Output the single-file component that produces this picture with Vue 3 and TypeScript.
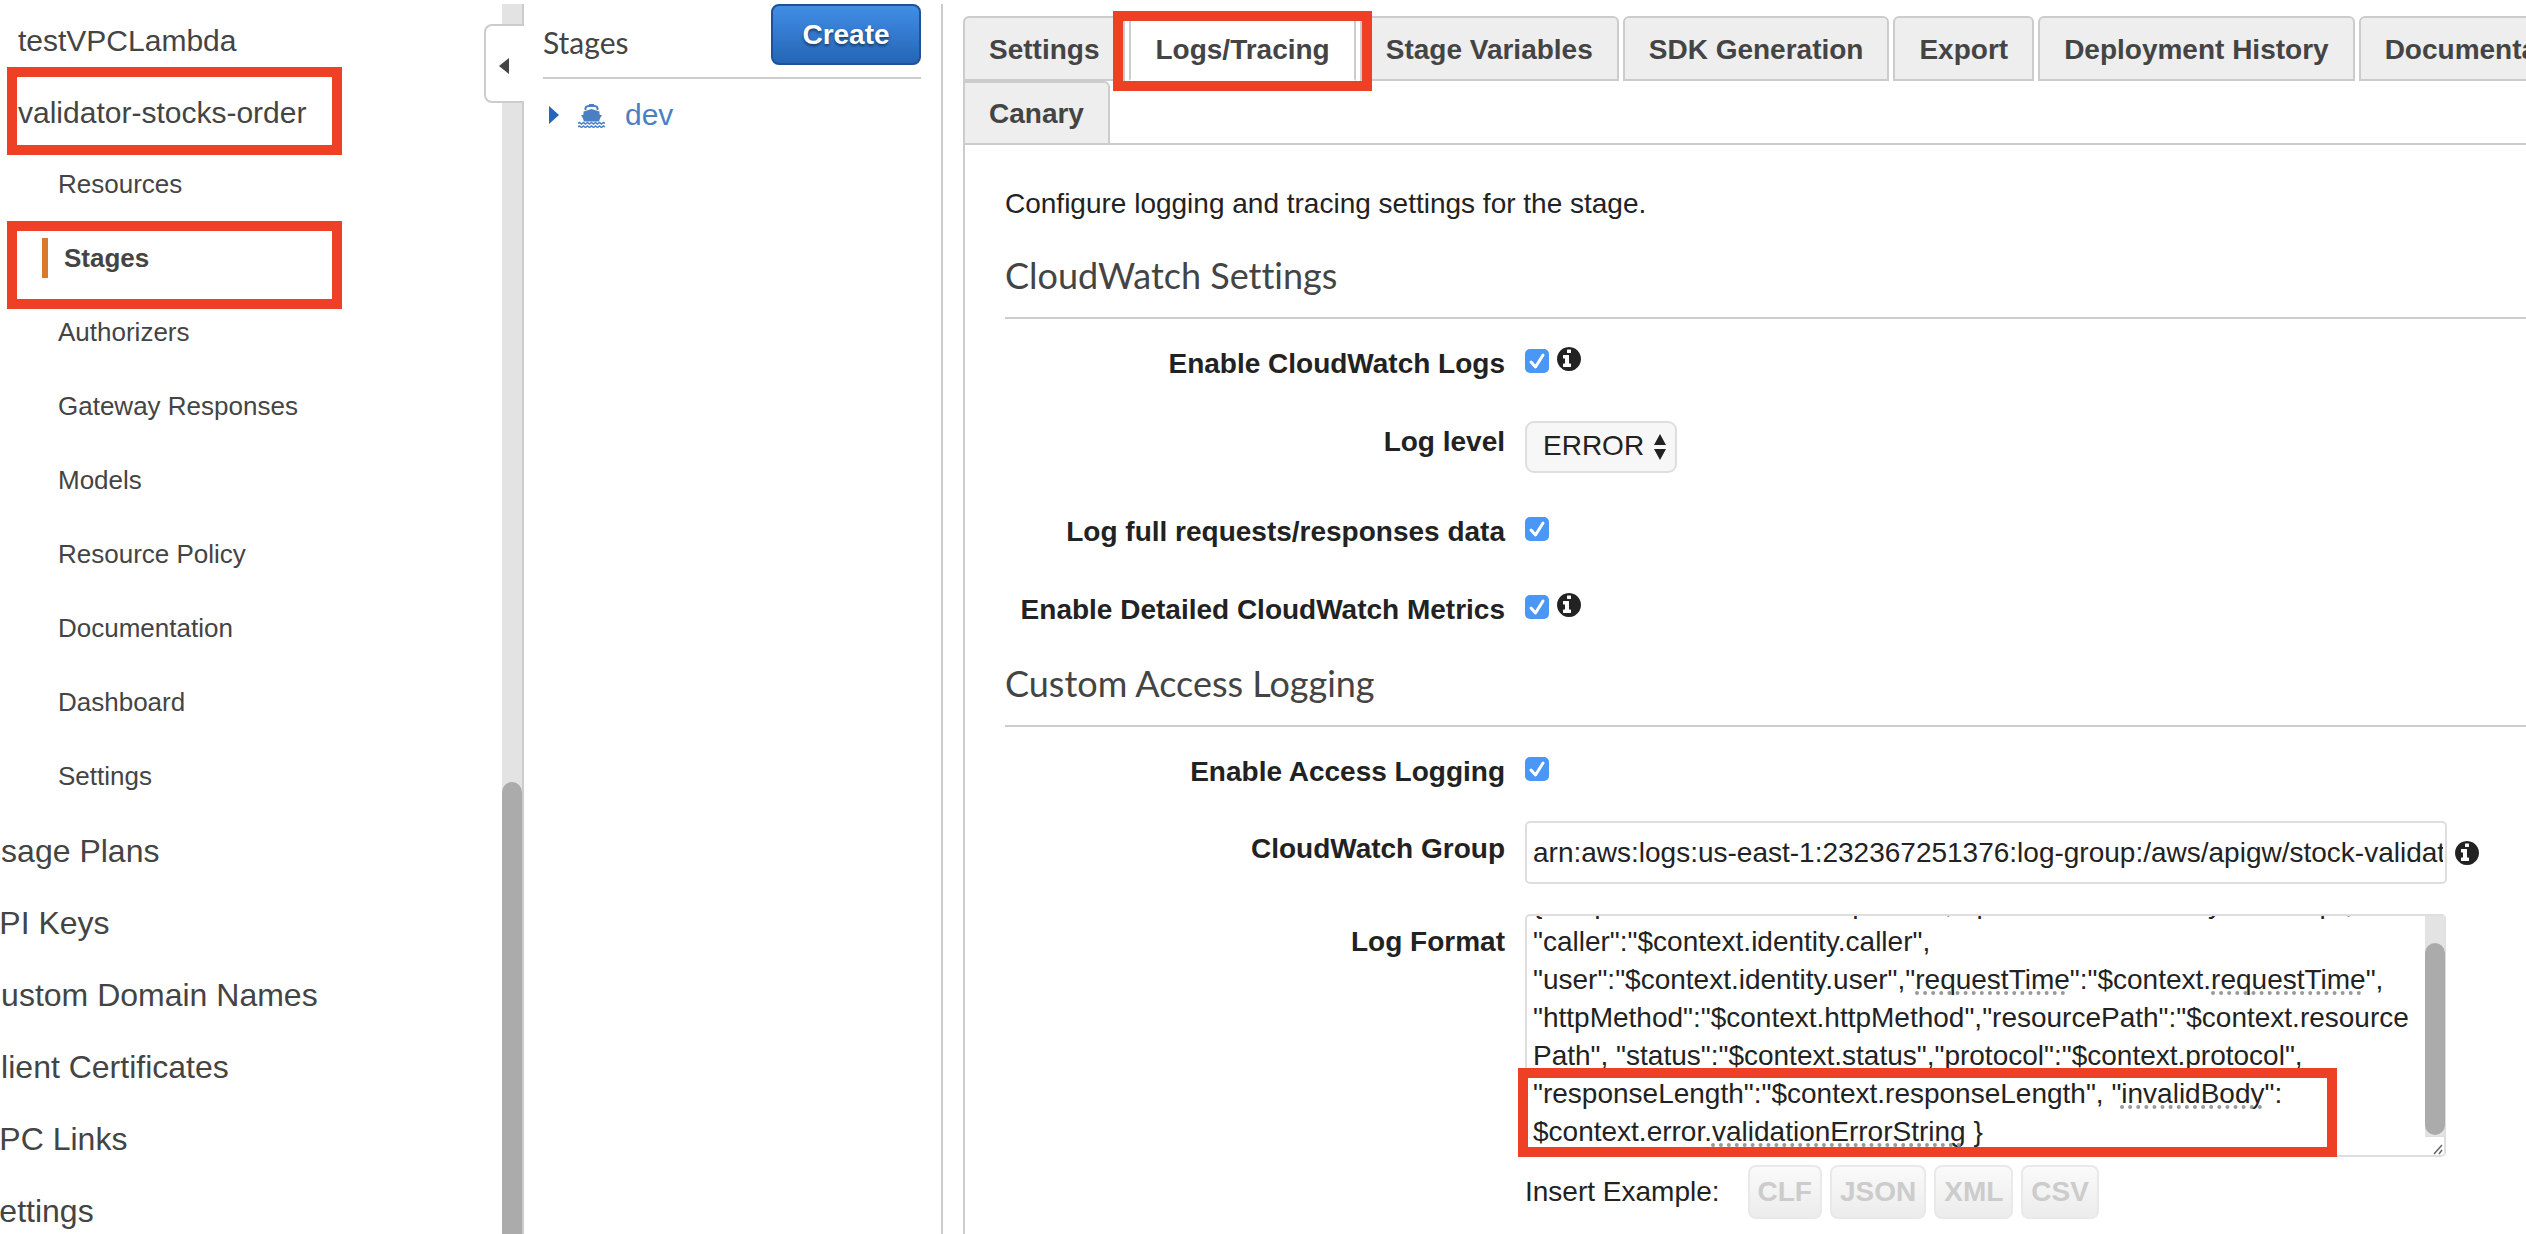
<script setup lang="ts">
import { onMounted, ref } from 'vue'

interface Tab {
  label: string
  active?: boolean
}

interface SpellingMark {
  line: number
  left: number
  width: number
}

const apis = ['testVPCLambda', 'validator-stocks-order']
const currentApi = 'validator-stocks-order'

const sections = [
  'Resources',
  'Stages',
  'Authorizers',
  'Gateway Responses',
  'Models',
  'Resource Policy',
  'Documentation',
  'Dashboard',
  'Settings',
]
const currentSection = 'Stages'

const globalLinks = [
  'Usage Plans',
  'API Keys',
  'Custom Domain Names',
  'Client Certificates',
  'VPC Links',
  'Settings',
]

const tabs: Tab[] = [
  { label: 'Settings' },
  { label: 'Logs/Tracing', active: true },
  { label: 'Stage Variables' },
  { label: 'SDK Generation' },
  { label: 'Export' },
  { label: 'Deployment History' },
  { label: 'Documentation History' },
]

const examples = ['CLF', 'JSON', 'XML', 'CSV']

const cloudWatchLogs = ref(true)
const logLevel = ref('ERROR')
const fullData = ref(true)
const detailedMetrics = ref(true)
const accessLogging = ref(true)
const logGroup = ref('arn:aws:logs:us-east-1:232367251376:log-group:/aws/apigw/stock-validator')
const logFormat = ref(
  [
    '{ "requestId":"$context.requestId", "ip":"$context.identity.sourceIp",',
    '"caller":"$context.identity.caller",',
    '"user":"$context.identity.user","requestTime":"$context.requestTime",',
    '"httpMethod":"$context.httpMethod","resourcePath":"$context.resource',
    'Path", "status":"$context.status","protocol":"$context.protocol",',
    '"responseLength":"$context.responseLength", "invalidBody":',
    '$context.error.validationErrorString }',
  ].join('\n'),
)

// Dotted spell-check underlines, counted in visible lines of the log format box
const marks: SpellingMark[] = [
  { line: 2, left: 390, width: 150 },
  { line: 2, left: 686, width: 150 },
  { line: 5, left: 595, width: 142 },
  { line: 6, left: 186, width: 250 },
]

const formatBox = ref<HTMLTextAreaElement | null>(null)

onMounted(() => {
  if (formatBox.value) formatBox.value.scrollTop = formatBox.value.scrollHeight
})
</script>

<template>
  <div class="console">
    <aside class="sidebar">
      <nav class="sidebar-nav">
        <ul class="api-list">
          <li v-for="api in apis" :key="api">
            <a href="#">{{ api }}</a>
            <span v-if="api === currentApi" class="callout callout-nav"></span>
          </li>
        </ul>
        <ul class="section-list">
          <li v-for="item in sections" :key="item" :class="{ current: item === currentSection }">
            <a href="#">{{ item }}</a>
            <span v-if="item === currentSection" class="callout callout-nav"></span>
          </li>
        </ul>
        <ul class="global-list">
          <li v-for="item in globalLinks" :key="item"><a href="#">{{ item }}</a></li>
        </ul>
      </nav>
      <div class="sidebar-track"><div class="sidebar-thumb"></div></div>
      <button class="collapse" type="button" aria-label="Collapse navigation">
        <svg width="10" height="16" viewBox="0 0 10 16"><path d="M10 0v16L0 8z" fill="#444" /></svg>
      </button>
    </aside>

    <section class="stages">
      <header class="stages-head">
        <h2>Stages</h2>
        <button class="create" type="button">Create</button>
      </header>
      <div class="stage">
        <svg class="stage-caret" width="10" height="18" viewBox="0 0 10 18"><path d="M0 0l10 9-10 9z" fill="#2467b9" /></svg>
        <svg class="stage-ship" width="27" height="25" viewBox="0 0 27 25" fill="none">
          <path d="M7.500 7V5Q8 3 11 3h5q3 0 3.500 2v2" stroke="#4a80c3" stroke-width="2" />
          <path d="M11 1h5v2h-5z" fill="#4a80c3" />
          <path d="M5.500 8.500l8-2.500 8 2.500v3l2.500 1q-2.500 2.500-3 6H6q-.5-3.500-3-6l2.500-1z" fill="#4a80c3" />
          <path d="M0 20.500l1.500-1 2 1.500 2-1.500 2 1.500 2-1.500 2 1.500 2-1.500 2 1.500 2-1.500 2 1.500 2-1.500 2 1.500 2-1.500 1.500 1M0 24l1.500-1 2 1.500 2-1.500 2 1.500 2-1.500 2 1.500 2-1.500 2 1.500 2-1.500 2 1.500 2-1.500 2 1.500 2-1.500 1.500 1" stroke="#4a80c3" stroke-width="1.500" />
        </svg>
        <a href="#">dev</a>
      </div>
    </section>

    <main class="main">
      <div class="tab-row">
        <div v-for="tab in tabs" :key="tab.label" class="tab-slot">
          <button class="tab" :class="{ active: tab.active }" type="button">{{ tab.label }}</button>
          <span v-if="tab.active" class="callout callout-tab"></span>
        </div>
      </div>
      <div class="tab-row second">
        <button class="tab" type="button">Canary</button>
      </div>

      <div class="panel">
        <p class="intro">Configure logging and tracing settings for the stage.</p>

        <h3>CloudWatch Settings</h3>
        <div class="rows">
          <div class="row">
            <label for="cw-logs">Enable CloudWatch Logs</label>
            <div class="control">
              <span class="check">
                <input id="cw-logs" v-model="cloudWatchLogs" type="checkbox" />
                <svg viewBox="0 0 24 24"><path d="M6 13l4.500 5L18 6" /></svg>
              </span>
              <svg class="info" viewBox="128 128 1536 1536"><path d="M1024 1376v-160q0-14-9-23t-23-9h-96v-512q0-14-9-23t-23-9h-320q-14 0-23 9t-9 23v160q0 14 9 23t23 9h96v320h-96q-14 0-23 9t-9 23v160q0 14 9 23t23 9h448q14 0 23-9t9-23zM1024 480v-160q0-14-9-23t-23-9h-192q-14 0-23 9t-9 23v160q0 14 9 23t23 9h192q14 0 23-9t9-23zM1664 896q0 209-103 385.500t-279.500 279.500-385.500 103-385.500-103-279.500-279.500-103-385.500 103-385.500 279.500-279.500 385.500-103 385.500 103 279.500 279.500 103 385.500z" /></svg>
            </div>
          </div>
          <div class="row">
            <label for="log-level">Log level</label>
            <div class="control">
              <span class="select">
                <select id="log-level" v-model="logLevel">
                  <option>ERROR</option>
                  <option>INFO</option>
                </select>
                <svg width="12" height="26" viewBox="0 0 12 26"><path d="M6 0l6 11H0zM6 26l6-11H0z" fill="#222" /></svg>
              </span>
            </div>
          </div>
          <div class="row">
            <label for="full-data">Log full requests/responses data</label>
            <div class="control">
              <span class="check">
                <input id="full-data" v-model="fullData" type="checkbox" />
                <svg viewBox="0 0 24 24"><path d="M6 13l4.500 5L18 6" /></svg>
              </span>
            </div>
          </div>
          <div class="row">
            <label for="metrics">Enable Detailed CloudWatch Metrics</label>
            <div class="control">
              <span class="check">
                <input id="metrics" v-model="detailedMetrics" type="checkbox" />
                <svg viewBox="0 0 24 24"><path d="M6 13l4.500 5L18 6" /></svg>
              </span>
              <svg class="info" viewBox="128 128 1536 1536"><path d="M1024 1376v-160q0-14-9-23t-23-9h-96v-512q0-14-9-23t-23-9h-320q-14 0-23 9t-9 23v160q0 14 9 23t23 9h96v320h-96q-14 0-23 9t-9 23v160q0 14 9 23t23 9h448q14 0 23-9t9-23zM1024 480v-160q0-14-9-23t-23-9h-192q-14 0-23 9t-9 23v160q0 14 9 23t23 9h192q14 0 23-9t9-23zM1664 896q0 209-103 385.500t-279.500 279.500-385.500 103-385.500-103-279.500-279.500-103-385.500 103-385.500 279.500-279.500 385.500-103 385.500 103 279.500 279.500 103 385.500z" /></svg>
            </div>
          </div>
        </div>

        <h3>Custom Access Logging</h3>
        <div class="rows compact">
          <div class="row">
            <label for="access">Enable Access Logging</label>
            <div class="control">
              <span class="check">
                <input id="access" v-model="accessLogging" type="checkbox" />
                <svg viewBox="0 0 24 24"><path d="M6 13l4.500 5L18 6" /></svg>
              </span>
            </div>
          </div>
          <div class="row tall">
            <label for="log-group">CloudWatch Group</label>
            <div class="control field">
              <input id="log-group" v-model="logGroup" class="text" type="text" />
              <svg class="info" viewBox="128 128 1536 1536"><path d="M1024 1376v-160q0-14-9-23t-23-9h-96v-512q0-14-9-23t-23-9h-320q-14 0-23 9t-9 23v160q0 14 9 23t23 9h96v320h-96q-14 0-23 9t-9 23v160q0 14 9 23t23 9h448q14 0 23-9t9-23zM1024 480v-160q0-14-9-23t-23-9h-192q-14 0-23 9t-9 23v160q0 14 9 23t23 9h192q14 0 23-9t9-23zM1664 896q0 209-103 385.500t-279.500 279.500-385.500 103-385.500-103-279.500-279.500-103-385.500 103-385.500 279.500-279.500 385.500-103 385.500 103 279.500 279.500 103 385.500z" /></svg>
            </div>
          </div>
          <div class="row tall">
            <label for="log-format">Log Format</label>
            <div class="format">
              <div class="format-box">
                <textarea id="log-format" ref="formatBox" v-model="logFormat" spellcheck="false"></textarea>
                <span
                  v-for="(mark, i) in marks"
                  :key="i"
                  class="mark"
                  :style="{ left: mark.left + 'px', width: mark.width + 'px', top: mark.line * 38 + 1 + 'px' }"
                ></span>
                <div class="format-track"><div class="format-thumb"></div></div>
                <svg class="grip" width="20" height="20" viewBox="0 0 20 20"><path d="M9 17l8-9M14 17l3-4" stroke="#666" stroke-width="1.500" fill="none" /></svg>
                <span class="callout callout-format"></span>
              </div>
              <div class="examples">
                <span>Insert Example:</span>
                <button v-for="name in examples" :key="name" type="button" disabled>{{ name }}</button>
              </div>
            </div>
          </div>
        </div>
      </div>
    </main>
  </div>
</template>

<style>
body {
  margin: 0;
  background: #fff;
}
</style>

<style scoped>
.console {
  display: flex;
  box-sizing: border-box;
  height: 100vh;
  padding-top: 4px;
  overflow: hidden;
  font-family: "Liberation Sans", Arial, sans-serif;
  font-size: 28px;
  line-height: 38px;
  color: #222;
}
.console * {
  box-sizing: border-box;
}
button,
input,
select,
textarea {
  margin: 0;
  font: inherit;
  color: inherit;
}
a {
  color: inherit;
  text-decoration: none;
}
ul {
  margin: 0;
  padding: 0;
  list-style: none;
}

.callout {
  position: absolute;
  z-index: 5;
  border: 10px solid #ed4024;
  pointer-events: none;
}

/* Left navigation */
.sidebar {
  position: relative;
  display: flex;
  flex: none;
  width: 524px;
  color: #444;
}
.sidebar-nav {
  flex: 1;
  padding-top: 1px;
  overflow: hidden;
}
.sidebar-nav li {
  position: relative;
  white-space: nowrap;
}
.api-list li {
  padding-left: 18px;
  font-size: 30px;
  line-height: 72px;
}
.section-list {
  margin-top: -2px;
}
.section-list li {
  padding-left: 58px;
  font-size: 26px;
  line-height: 74px;
}
.section-list .current {
  padding-left: 42px;
  font-weight: 700;
}
.current a {
  display: inline-block;
  padding-left: 16px;
  border-left: 6px solid #d9792b;
  line-height: 40px;
}
.global-list {
  margin-top: 2px;
}
.global-list li {
  margin-left: -22px;
  font-size: 32px;
  line-height: 72px;
}
.callout-nav {
  top: -10px;
  left: 7px;
  width: 335px;
  height: 88px;
}
.section-list .callout-nav {
  top: 0;
}
.sidebar-track {
  display: flex;
  flex-direction: column;
  justify-content: flex-end;
  width: 22px;
  border-right: 2px solid #ccc;
  background: #e3e3e3;
}
.sidebar-thumb {
  height: 452px;
  border-radius: 10px 10px 0 0;
  background: #ababab;
}
.collapse {
  position: absolute;
  top: 20px;
  right: 0;
  display: flex;
  align-items: center;
  width: 40px;
  height: 79px;
  padding: 4px 0 0 13px;
  border: 2px solid #ccc;
  border-right: 0;
  border-radius: 8px 0 0 8px;
  background: #fff;
}

/* Stage tree */
.stages {
  flex: none;
  width: 419px;
  padding: 0 20px 0 19px;
  border-right: 2px solid #ccc;
}
.stages-head {
  display: flex;
  align-items: flex-start;
  justify-content: space-between;
  height: 75px;
  border-bottom: 2px solid #ccc;
}
h2,
h3 {
  margin: 0;
  font-family: Lato, sans-serif;
  font-weight: 400;
  font-variant-ligatures: none;
  color: #444;
}
h2 {
  padding-top: 19px;
  font-size: 30px;
  line-height: 38px;
}
.create {
  width: 150px;
  height: 61px;
  border: 2px solid #1e5296;
  border-radius: 8px;
  background: linear-gradient(#418ee6, #2465b5);
  color: #fff;
  font-weight: 700;
  text-shadow: 0 2px 3px rgba(0, 0, 0, 0.5);
}
.stage {
  display: flex;
  align-items: center;
  padding: 17px 0 0 6px;
  font-size: 30px;
  color: #4a80c3;
}
.stage-ship {
  margin: 0 20px 0 19px;
}

/* Tabs */
.main {
  flex: 1;
  min-width: 0;
  padding: 12px 0 0 20px;
}
.tab-row {
  display: flex;
  gap: 4px;
  margin-right: -400px;
}
.tab-row.second {
  height: 64px;
  margin-right: 0;
  border-bottom: 2px solid #ccc;
}
.tab-slot {
  position: relative;
}
.tab {
  height: 65px;
  padding: 2px 24px 0;
  border: 2px solid #ccc;
  border-radius: 6px 6px 0 0;
  background: #eee;
  color: #444;
  font-weight: 700;
  white-space: nowrap;
}
.tab.active {
  border-top-color: #d9792b;
  border-bottom-color: #fff;
  background: #fff;
}
.second .tab {
  height: 64px;
  border-top-left-radius: 0;
}
.callout-tab {
  top: -5px;
  right: -16px;
  left: -16px;
  height: 80px;
}

/* Form */
.panel {
  height: 100%;
  padding: 40px 0 0 40px;
  border-left: 2px solid #ccc;
}
.intro {
  margin: 0 0 30px;
}
h3 {
  padding-bottom: 20px;
  border-bottom: 2px solid #ccc;
  font-size: 36px;
  line-height: 44px;
}
.rows {
  display: flex;
  flex-direction: column;
  gap: 38px;
  padding: 24px 0 32px;
}
.rows.compact {
  gap: 30px;
}
.row {
  display: flex;
  gap: 20px;
  min-height: 40px;
}
.row label {
  flex: none;
  width: 500px;
  padding-top: 2px;
  font-weight: 700;
  text-align: right;
}
.row.tall label {
  padding-top: 9px;
}
.control {
  display: flex;
  align-items: flex-start;
  gap: 8px;
}
.check {
  position: relative;
  width: 24px;
  height: 24px;
  margin-top: 6px;
}
.check input {
  display: block;
  width: 24px;
  height: 24px;
  border-radius: 5px;
  background: #4a97f6;
  appearance: none;
}
.check svg {
  position: absolute;
  inset: 0;
  fill: none;
  stroke: #fff;
  stroke-width: 3;
  stroke-linecap: round;
  stroke-linejoin: round;
  pointer-events: none;
}
.info {
  flex: none;
  width: 24px;
  height: 24px;
  margin-top: 4px;
  fill: #222;
}
.select {
  position: relative;
}
.select select {
  display: block;
  width: 152px;
  height: 52px;
  padding: 0 0 3px 16px;
  border: 2px solid #dedede;
  border-radius: 9px;
  background: #f7f7f7;
  appearance: none;
}
.select svg {
  position: absolute;
  top: 13px;
  right: 11px;
  pointer-events: none;
}
.field {
  flex: 1;
  align-items: center;
  padding-right: 47px;
}
.field .info {
  margin-top: 0;
}
.text {
  flex: 1;
  min-width: 0;
  height: 63px;
  padding: 0 2px 0 6px;
  border: 2px solid #dedede;
  border-radius: 5px;
  background: #fff;
}
.format {
  flex: 1;
  padding-right: 80px;
}
.format-box {
  position: relative;
}
textarea {
  display: block;
  width: 100%;
  height: 243px;
  padding: 4px 22px 4px 6px;
  border: 2px solid #dedede;
  border-radius: 5px;
  background: #fff;
  line-height: 38px;
  white-space: pre;
  overflow: hidden;
  resize: none;
}
.mark {
  position: absolute;
  border-bottom: 4px dotted #999;
}
.format-track {
  position: absolute;
  top: 2px;
  right: 1px;
  bottom: 20px;
  width: 20px;
  padding-top: 27px;
  border-bottom: 1px solid #ddd;
  background: #e3e3e3;
}
.format-thumb {
  height: 192px;
  border-radius: 10px;
  background: #ababab;
}
.grip {
  position: absolute;
  right: 1px;
  bottom: 0;
}
.callout-format {
  bottom: 0;
  left: -7px;
  width: 819px;
  height: 89px;
}
.examples {
  display: flex;
  align-items: center;
  gap: 8px;
  padding-top: 8px;
}
.examples span {
  margin-right: 20px;
}
.examples button {
  height: 54px;
  padding: 0 8px;
  border: 2px solid #e9e9e9;
  border-radius: 8px;
  background: linear-gradient(#fafafa, #ececec);
  color: #ccc;
  font-weight: 700;
}
</style>
